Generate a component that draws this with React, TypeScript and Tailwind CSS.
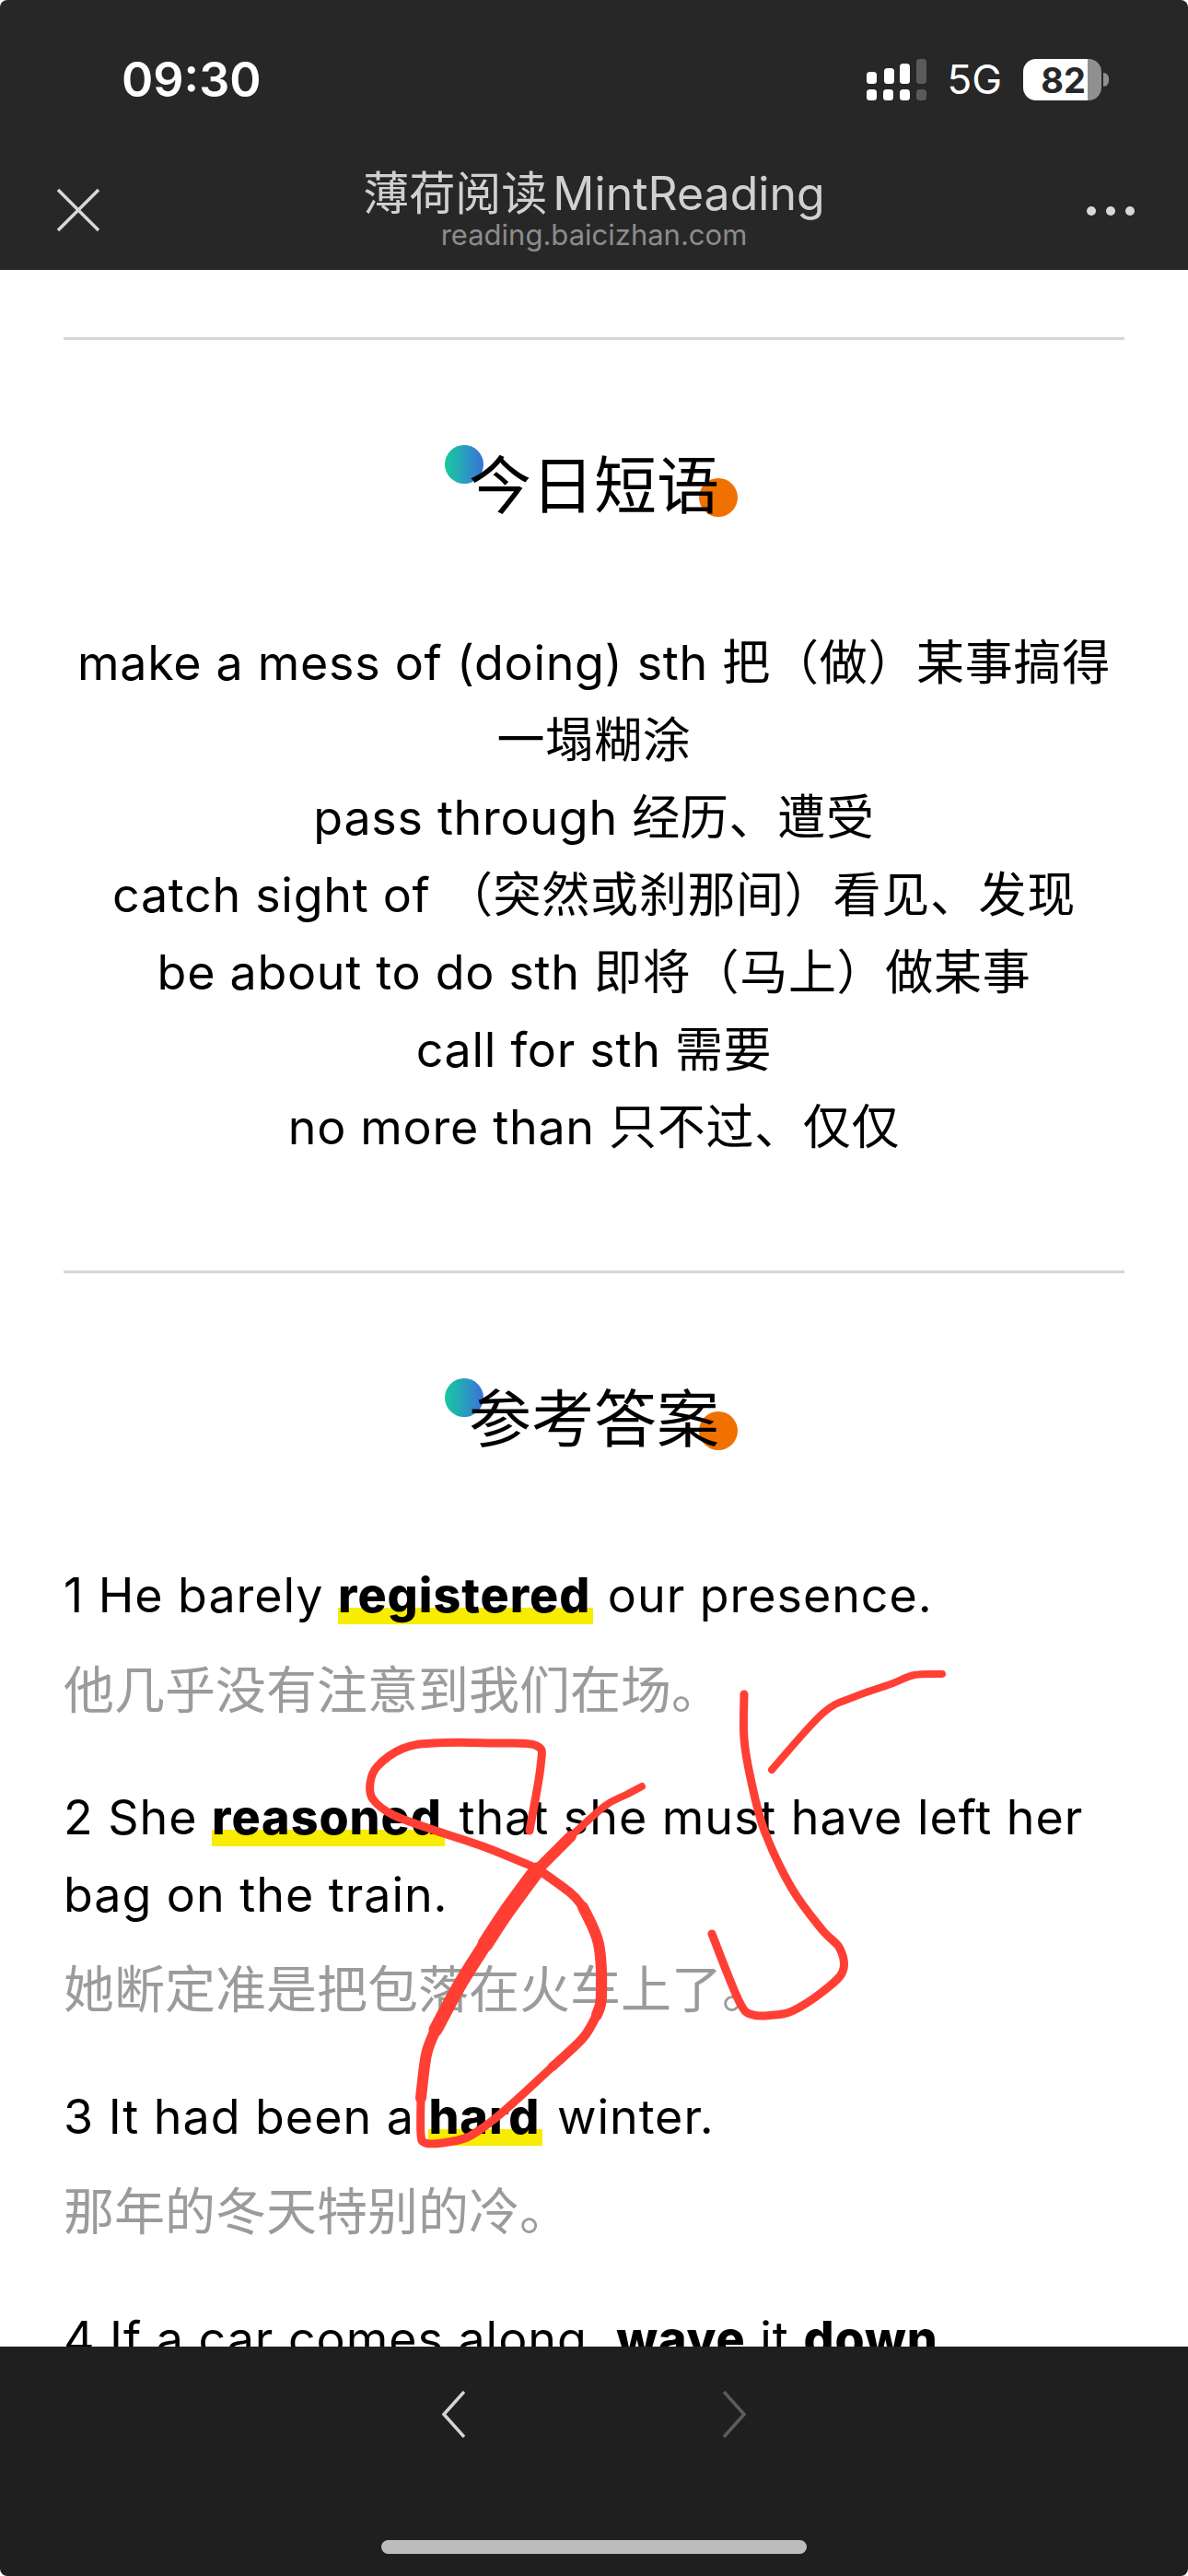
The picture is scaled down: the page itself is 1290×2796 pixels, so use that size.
import React from 'react';

type Point = [number, number];

// smooth a hand-drawn stroke through its sampled points
function strokePath(pts: Point[]) {
  let d = `M${pts[0][0]} ${pts[0][1]}`;
  for (let i = 0; i < pts.length - 1; i++) {
    const p0 = pts[Math.max(i - 1, 0)];
    const p1 = pts[i];
    const p2 = pts[i + 1];
    const p3 = pts[Math.min(i + 2, pts.length - 1)];
    const c1x = p1[0] + (p2[0] - p0[0]) / 6;
    const c1y = p1[1] + (p2[1] - p0[1]) / 6;
    const c2x = p2[0] - (p3[0] - p1[0]) / 6;
    const c2y = p2[1] - (p3[1] - p1[1]) / 6;
    d += ` C${c1x} ${c1y} ${c2x} ${c2y} ${p2[0]} ${p2[1]}`;
  }
  return d;
}

const INK: { width: number; pts: Point[] }[] = [
  { width: 9, pts: [[575, 1987], [587, 1917], [583, 1895], [540, 1892], [470, 1892], [437, 1898], [410, 1917], [402, 1935], [405, 1953], [427, 1970], [473, 1987], [527, 2005], [583, 2028]] },
  { width: 10, pts: [[583, 2028], [620, 2055], [633, 2070]] },
  { width: 12, pts: [[633, 2070], [650, 2110], [653, 2167], [648, 2187]] },
  { width: 10, pts: [[648, 2187], [633, 2212], [600, 2243]] },
  { width: 9, pts: [[600, 2243], [560, 2280], [533, 2303], [507, 2320], [480, 2326], [462, 2326], [457, 2317], [457, 2277]] },
  { width: 12, pts: [[457, 2277], [463, 2230], [473, 2203]] },
  { width: 15, pts: [[473, 2203], [500, 2153], [527, 2110]] },
  { width: 17, pts: [[527, 2110], [550, 2075], [583, 2030]] },
  { width: 12, pts: [[583, 2030], [620, 1993]] },
  { width: 8, pts: [[620, 1993], [657, 1960], [680, 1948], [697, 1939]] },
  { width: 9, pts: [[808, 1839], [808, 1887], [815, 1930], [830, 1987], [860, 2050], [893, 2095], [912, 2115], [915, 2140], [893, 2162], [860, 2183], [840, 2187], [818, 2187], [803, 2173], [773, 2099]] },
  { width: 8, pts: [[838, 1921], [893, 1860], [927, 1842], [967, 1828], [993, 1818], [1023, 1817]] },
];

const PHRASES = [
  'make a mess of (doing) sth 把（做）某事搞得一塌糊涂',
  'pass through 经历、遭受',
  'catch sight of （突然或刹那间）看见、发现',
  'be about to do sth 即将（马上）做某事',
  'call for sth 需要',
  'no more than 只不过、仅仅',
];

function Mark({ children }: { children: React.ReactNode }) {
  return (
    <strong className="font-extrabold bg-[linear-gradient(transparent_72%,#f8ec00_72%)] pr-[3px]">{children}</strong>
  );
}

function SectionTitle({ children }: { children: React.ReactNode }) {
  return (
    <div className="relative w-[318px] mx-auto mt-[112px] text-center">
      <span className="absolute left-[-3px] top-[2px] w-[42px] h-[42px] rounded-full bg-gradient-to-r from-[#16c99b] to-[#3a6fd8]" />
      <span className="absolute right-[3px] top-[38px] w-[42px] h-[42px] rounded-full bg-[#f07000]" />
      <h2 className="relative text-[68px] leading-[92px] font-normal text-black tracking-normal">{children}</h2>
    </div>
  );
}

function Divider() {
  return <div className="h-[3px] bg-[#d6d6d6]" />;
}

function SignalIcon() {
  return (
    <svg width="65" height="45" viewBox="0 0 65 45" className="block">
      <g fill="#fff">
        <rect x="0" y="14" width="11" height="13" rx="3.5" />
        <rect x="19" y="10" width="11" height="17" rx="3.5" />
        <rect x="36" y="5" width="11" height="22" rx="3.5" />
        <rect x="0" y="33" width="11" height="12" rx="3.5" />
        <rect x="18" y="33" width="11" height="12" rx="3.5" />
        <rect x="36" y="33" width="11" height="12" rx="3.5" />
      </g>
      <g fill="#5a5a5a">
        <rect x="54" y="0" width="11" height="27" rx="3.5" />
        <rect x="54" y="33" width="11" height="12" rx="3.5" />
      </g>
    </svg>
  );
}

export default function App() {
  return (
    <div className="relative h-[2796px] w-[1290px] flex flex-col overflow-hidden bg-white font-['Inter','Noto_Sans_CJK_SC',sans-serif]">
      {/* Top bar */}
      <header className="h-[293px] shrink-0 bg-[#272727] rounded-t-[8px]">
        <div className="flex items-center justify-between pl-[132px] pr-[86px] pt-[64px]">
          <span className="text-[52px] leading-[45px] font-semibold text-white">09:30</span>
          <div className="flex items-center">
            <SignalIcon />
            <span className="ml-[22px] text-[44px] leading-[45px] font-normal text-white">5G</span>
            <div className="ml-[23px] flex h-[45px] w-[85px] overflow-hidden rounded-[14px]">
              <div className="flex w-[70px] items-center justify-end bg-white pr-[2px]">
                <span className="text-[38px] leading-none font-bold text-[#272727]">82</span>
              </div>
              <div className="w-[15px] bg-[#909090]" />
            </div>
            <div className="ml-[2px] h-[15px] w-[6px] rounded-r-full bg-[#909090]" />
          </div>
        </div>
        <div className="flex items-center justify-between px-[58px] mt-[71px]">
          <svg width="52" height="52" viewBox="0 0 52 52" fill="none" stroke="#d8d8d8" strokeWidth="3.5" className="mt-[4px]">
            <path d="M5 5L49 49M49 5L5 49" />
          </svg>
          <div className="text-center">
            <div className="text-[50px] leading-[60px] text-[#d0d0d0]">
              薄荷阅读<span className="ml-[6px]">MintReading</span>
            </div>
            <div className="text-[31px] leading-[30px] text-[#8c8c8c]">reading.baicizhan.com</div>
          </div>
          <svg width="52" height="10" viewBox="0 0 52 10" fill="#d8d8d8" className="mt-[8px]">
            <circle cx="5" cy="5" r="5" />
            <circle cx="26" cy="5" r="5" />
            <circle cx="47" cy="5" r="5" />
          </svg>
        </div>
      </header>

      {/* Article */}
      <main className="flex-1 min-h-0 overflow-hidden px-[69px] pt-[73px] text-black text-[52px] leading-[84px]">
        <Divider />
        <SectionTitle>今日短语</SectionTitle>
        <div className="mt-[105px] text-center tracking-[0.7px]">
          {PHRASES.map((line) => (
            <p key={line}>{line}</p>
          ))}
        </div>
        <div className="mt-[113px]">
          <Divider />
        </div>
        <SectionTitle>参考答案</SectionTitle>
        <div className="mt-[104px] tracking-[0.95px]">
          <p>1 He barely <Mark>registered</Mark> our presence.</p>
          <p className="mt-[18px] mb-[55px] text-[55px] tracking-normal text-[#9b9b9b]">他几乎没有注意到我们在场。</p>
          <p>2 She <Mark>reasoned</Mark> that she must have left her bag on the train.</p>
          <p className="mt-[18px] mb-[55px] text-[55px] tracking-normal text-[#9b9b9b]">她断定准是把包落在火车上了。</p>
          <p>3 It had been a <Mark>hard</Mark> winter.</p>
          <p className="mt-[18px] mb-[55px] text-[55px] tracking-normal text-[#9b9b9b]">那年的冬天特别的冷。</p>
          <p>4 If a car comes along, <strong className="font-extrabold">wave</strong> it <strong className="font-extrabold">down</strong>.</p>
        </div>
      </main>

      {/* Bottom toolbar */}
      <footer className="h-[249px] shrink-0 bg-[#1f1f1f] rounded-b-[8px]">
        <div className="flex justify-center gap-[280px] pt-[48px]">
          <svg width="25" height="51" viewBox="0 0 25 51" fill="none" stroke="#d4d4d4" strokeWidth="3.5">
            <path d="M24 1L2 25.5L24 50" />
          </svg>
          <svg width="25" height="51" viewBox="0 0 25 51" fill="none" stroke="#5c5c5c" strokeWidth="3.5">
            <path d="M1 1L23 25.5L1 50" />
          </svg>
        </div>
        <div className="mx-auto mt-[111px] h-[15px] w-[462px] rounded-full bg-[#bcbcbc]" />
      </footer>

      {/* Red handwriting on top of the page */}
      <svg className="absolute inset-0 pointer-events-none" width="1290" height="2796" viewBox="0 0 1290 2796" fill="none" stroke="#ff3f34" strokeLinecap="round" strokeLinejoin="round">
        {INK.map((s, i) => (
          <path key={i} d={strokePath(s.pts)} strokeWidth={s.width} />
        ))}
      </svg>
    </div>
  );
}
